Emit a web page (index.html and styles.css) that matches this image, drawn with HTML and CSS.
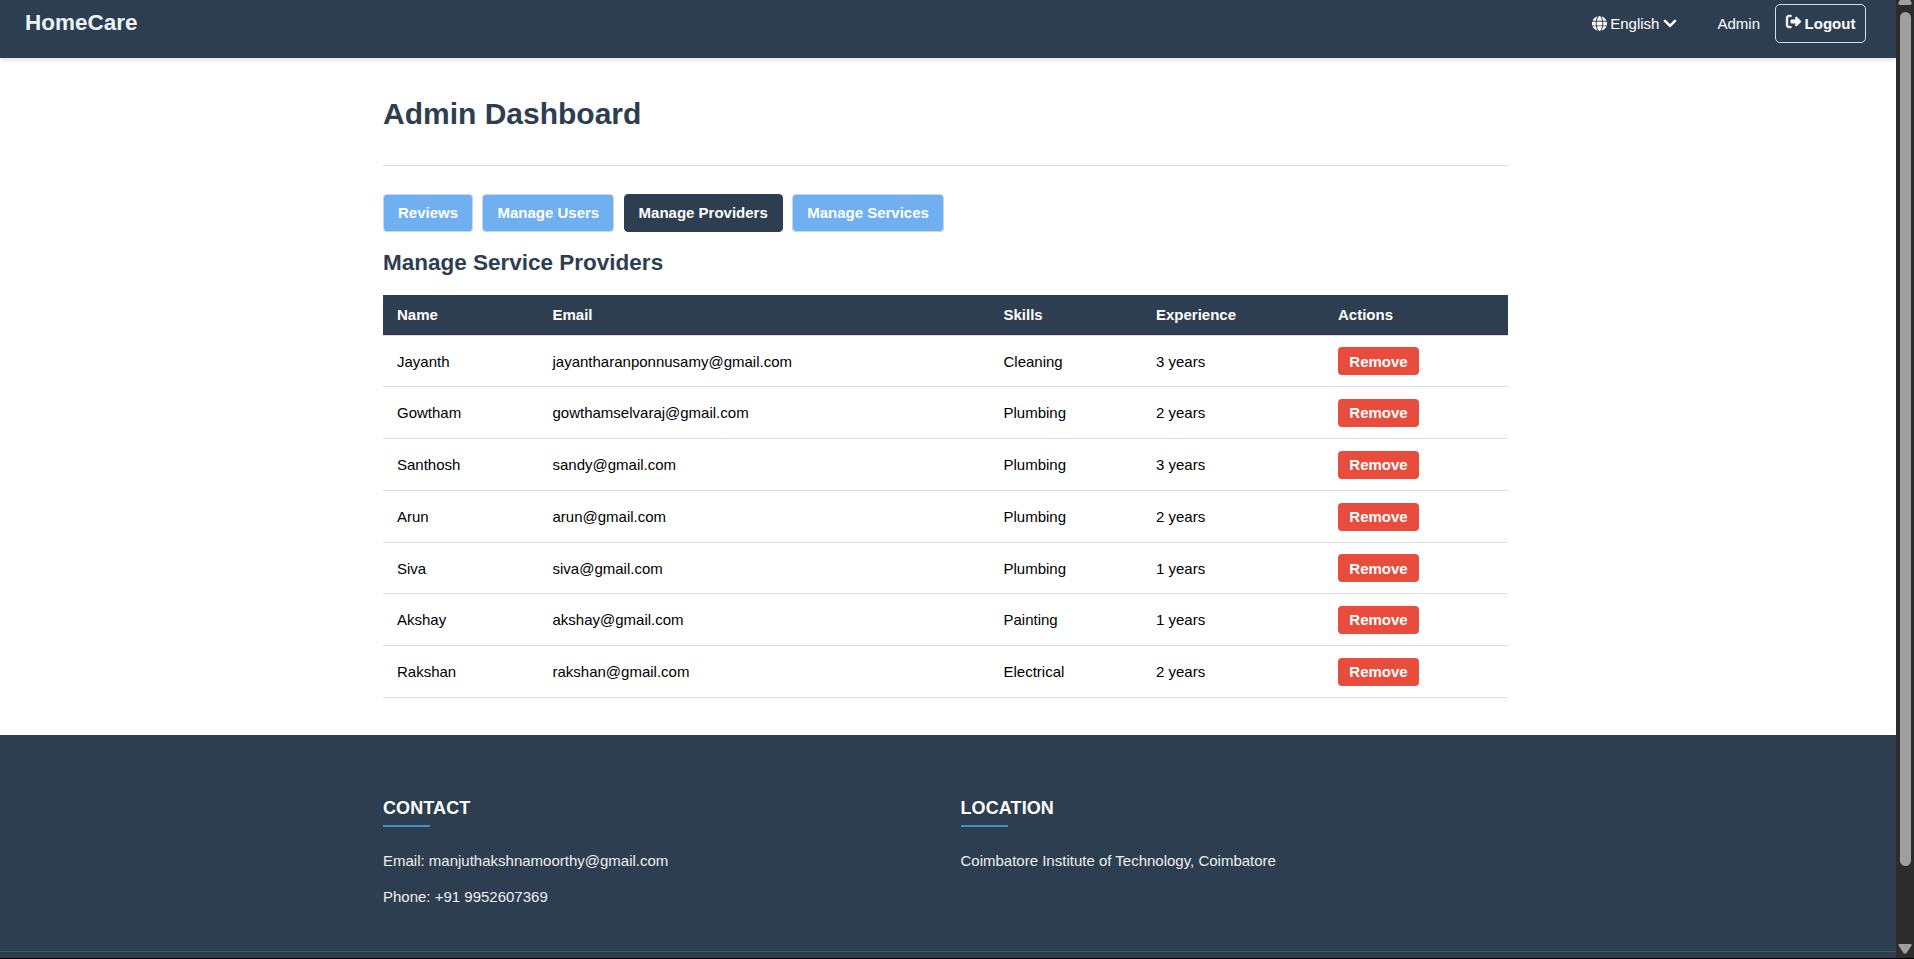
FILE: index.html
```html
<!DOCTYPE html>
<html lang="en">
<head>
<meta charset="utf-8">
<title>HomeCare - Admin Dashboard</title>
<link rel="stylesheet" href="styles.css">
</head>
<body>
<div class="window">
  <div class="page">
    <header class="navbar">
      <div class="logo">HomeCare</div>
      <nav class="nav">
        <span class="lang">
          <svg class="globe" viewBox="0 0 512 512"><path fill="currentColor" d="M352 256c0 22.2-1.2 43.6-3.3 64H163.300c-2.200-20.400-3.300-41.800-3.300-64s1.200-43.600 3.300-64H348.700c2.200 20.400 3.300 41.800 3.300 64zm28.800-64H503.900c5.300 20.500 8.100 41.900 8.100 64s-2.800 43.500-8.100 64H380.800c2.100-20.600 3.200-42 3.200-64s-1.100-43.400-3.200-64zm112.600-32H376.700c-10-63.900-29.800-117.400-55.300-151.600c78.300 20.700 142 77.500 171.900 151.600zm-149.100 0H167.700c6.100-36.400 15.500-68.600 27-94.700c10.500-23.600 22.200-40.700 33.500-51.500C239.400 3.200 248.700 0 256 0s16.600 3.200 27.800 13.800c11.300 10.800 23 27.900 33.500 51.500c11.600 26 20.900 58.200 27 94.700zm-209 0H18.600C48.600 85.900 112.200 29.100 190.600 8.400C165.100 42.600 145.300 96.100 135.300 160zM8.100 192H131.200c-2.100 20.600-3.200 42-3.200 64s1.100 43.400 3.200 64H8.100C2.800 299.500 0 278.100 0 256s2.800-43.500 8.100-64zM194.700 446.600c-11.600-26-20.900-58.200-27-94.600H344.300c-6.100 36.400-15.500 68.600-27 94.600c-10.500 23.600-22.200 40.700-33.500 51.500C272.600 508.800 263.300 512 256 512s-16.600-3.200-27.800-13.800c-11.300-10.800-23-27.900-33.500-51.500zM135.300 352c10 63.900 29.800 117.400 55.300 151.600C112.200 482.900 48.600 426.100 18.600 352H135.300zm358.100 0c-30 74.100-93.600 130.900-171.900 151.600c25.500-34.200 45.200-87.700 55.300-151.600H493.400z"/></svg>
          <span>English</span>
          <svg class="chevron" viewBox="0 0 14 9"><path d="M2 1.800 7 6.800l5-5" fill="none" stroke="currentColor" stroke-width="2.600" stroke-linecap="round" stroke-linejoin="round"/></svg>
        </span>
        <span class="user">Admin</span>
        <button class="logout">
          <svg class="exit" viewBox="0 32 512 448"><path fill="currentColor" stroke="currentColor" stroke-width="14" d="M502.600 278.600c12.500-12.500 12.500-32.800 0-45.300l-128-128c-9.200-9.200-22.900-11.900-34.900-6.900S320 115.100 320 128v64H192c-17.700 0-32 14.300-32 32v64c0 17.700 14.300 32 32 32H320v64c0 12.900 7.800 24.600 19.800 29.600s25.700 2.200 34.900-6.900l128-128zM160 96c17.700 0 32-14.300 32-32s-14.300-32-32-32H96C43 32 0 75 0 128V384c0 53 43 96 96 96h64c17.700 0 32-14.300 32-32s-14.300-32-32-32H96c-17.700 0-32-14.300-32-32V128c0-17.700 14.300-32 32-32h64z"/></svg>
          <span>Logout</span>
        </button>
      </nav>
    </header>
    <main class="container main">
      <h1>Admin Dashboard</h1>
      <div class="tabs">
        <button class="tab">Reviews</button>
        <button class="tab">Manage Users</button>
        <button class="tab active">Manage Providers</button>
        <button class="tab">Manage Services</button>
      </div>
      <h2>Manage Service Providers</h2>
      <table class="providers">
        <colgroup><col class="c-name"><col class="c-email"><col class="c-skills"><col class="c-exp"><col></colgroup>
        <thead><tr><th>Name</th><th>Email</th><th>Skills</th><th>Experience</th><th>Actions</th></tr></thead>
        <tbody>
          <tr class="short"><td>Jayanth</td><td>jayantharanponnusamy@gmail.com</td><td>Cleaning</td><td>3 years</td><td><button class="remove">Remove</button></td></tr>
          <tr><td>Gowtham</td><td>gowthamselvaraj@gmail.com</td><td>Plumbing</td><td>2 years</td><td><button class="remove">Remove</button></td></tr>
          <tr><td>Santhosh</td><td>sandy@gmail.com</td><td>Plumbing</td><td>3 years</td><td><button class="remove">Remove</button></td></tr>
          <tr><td>Arun</td><td>arun@gmail.com</td><td>Plumbing</td><td>2 years</td><td><button class="remove">Remove</button></td></tr>
          <tr class="short"><td>Siva</td><td>siva@gmail.com</td><td>Plumbing</td><td>1 years</td><td><button class="remove">Remove</button></td></tr>
          <tr><td>Akshay</td><td>akshay@gmail.com</td><td>Painting</td><td>1 years</td><td><button class="remove">Remove</button></td></tr>
          <tr><td>Rakshan</td><td>rakshan@gmail.com</td><td>Electrical</td><td>2 years</td><td><button class="remove">Remove</button></td></tr>
        </tbody>
      </table>
    </main>
    <footer class="footer">
      <div class="container footer-cols">
        <section>
          <h3>CONTACT</h3>
          <p>Email: manjuthakshnamoorthy@gmail.com</p>
          <p>Phone: +91 9952607369</p>
        </section>
        <section>
          <h3>LOCATION</h3>
          <p>Coimbatore Institute of Technology, Coimbatore</p>
        </section>
      </div>
      <div class="footer-bottom"></div>
    </footer>
  </div>
  <div class="scrollbar">
    <svg class="arrow-up" viewBox="0 0 14 5"><path d="M2 0h10l1.500 2.500Q14 5 12 5H2Q0 5 .5 2.500z" fill="#9f9f9f"/></svg>
    <div class="thumb"></div>
    <svg class="arrow-down" viewBox="0 0 14 10"><path d="M1.500 0h11q1.500 0 1 1.500L8.500 9q-1.500 1.500-3 0L.5 1.500Q0 0 1.500 0z" fill="#9f9f9f"/></svg>
  </div>
</div>
</body>
</html>
```
FILE: styles.css
```css
* { box-sizing: border-box; }
body {
  margin: 0;
  background: #000;
  font-family: "Liberation Sans", Arial, sans-serif;
  font-size: 15px;
  line-height: 17px;
  overflow: hidden;
}
h1, h2, h3, p { margin: 0; }
button { font: inherit; font-weight: bold; color: #fff; margin: 0; }
.window { display: flex; height: 958px; }
.page { flex: 1; display: flex; flex-direction: column; background: #fff; }

.navbar {
  display: flex;
  justify-content: space-between;
  align-items: flex-start;
  height: 58px;
  padding: 4px 30px 0 25px;
  background: #2d3e50;
  color: #ecf3f9;
  box-shadow: 0 2px 5px rgba(0, 0, 0, .12);
}
.logo { font-size: 22.5px; font-weight: bold; line-height: 26px; padding-top: 6px; }
.nav { display: flex; align-items: center; height: 39px; color: #fff; }
.lang { display: flex; align-items: center; margin-right: 40px; }
.globe { width: 15px; height: 15px; margin-right: 3px; }
.chevron { width: 14px; height: 9px; margin-left: 4px; }
.user { margin-right: 15px; }
.logout {
  display: flex;
  align-items: center;
  justify-content: center;
  gap: 4px;
  width: 91px;
  height: 39px;
  padding: 0;
  border: 1px solid #d5dce3;
  border-radius: 5px;
  background: transparent;
}
.exit { width: 15px; height: 13px; margin-bottom: 4px; overflow: visible; }

.container { width: 1125px; margin-left: 383px; }
.main { height: 677px; }
h1 {
  font-size: 30px;
  line-height: 34px;
  color: #2d3e50;
  padding: 39px 0 34px;
  border-bottom: 1px solid #ddd;
}
.tabs { display: flex; gap: 9.4px; margin-top: 28px; }
.tab {
  height: 38px;
  padding: 0 14px 1px;
  border: 1px solid #c3d6ea;
  border-radius: 4px;
  background: #70aff0;
}
.tab.active { background: #2d3e50; border-color: #2d3e50; }
h2 { font-size: 22.5px; line-height: 26px; color: #2d3e50; margin: 18px 0 19px; }

.providers { width: 1125px; table-layout: fixed; border-collapse: separate; border-spacing: 0; color: #000; }
.c-name { width: 155.5px; }
.c-email { width: 451px; }
.c-skills { width: 152.5px; }
.c-exp { width: 182px; }
th, td { padding: 0 14px; text-align: left; border-bottom: 1px solid #ddd; }
th { height: 41px; padding-bottom: 1px; background: #2d3e50; background-clip: padding-box; color: #fff; }
td { height: 52px; }
.short td { height: 51px; }
.remove {
  display: block;
  width: 81px;
  height: 28px;
  padding: 0;
  border: 0;
  border-radius: 4px;
  background: #e74c3c;
}

.footer { flex: 1; background: #2d3e50; color: #ecf0f1; }
.footer-cols { display: grid; grid-template-columns: 547px 547px; column-gap: 30.5px; height: 216px; padding-top: 63px; }
h3 { font-size: 18px; line-height: 20px; letter-spacing: .1px; color: #fff; margin-bottom: 25px; }
h3::after { content: ""; display: block; width: 47px; height: 2px; margin-top: 7px; background: #3f91cb; }
.footer p { margin-bottom: 19px; }
.footer-bottom { border-top: 1px solid #48545f; }

.scrollbar { display: flex; flex-direction: column; align-items: center; width: 18px; background: #2c2c2c; padding-bottom: 4px; }
.arrow-up { width: 14px; height: 5px; }
.thumb { width: 11px; height: 854px; margin: 7px 0 78px; border-radius: 6px; background: #9f9f9f; }
.arrow-down { width: 14px; height: 10px; }
```
